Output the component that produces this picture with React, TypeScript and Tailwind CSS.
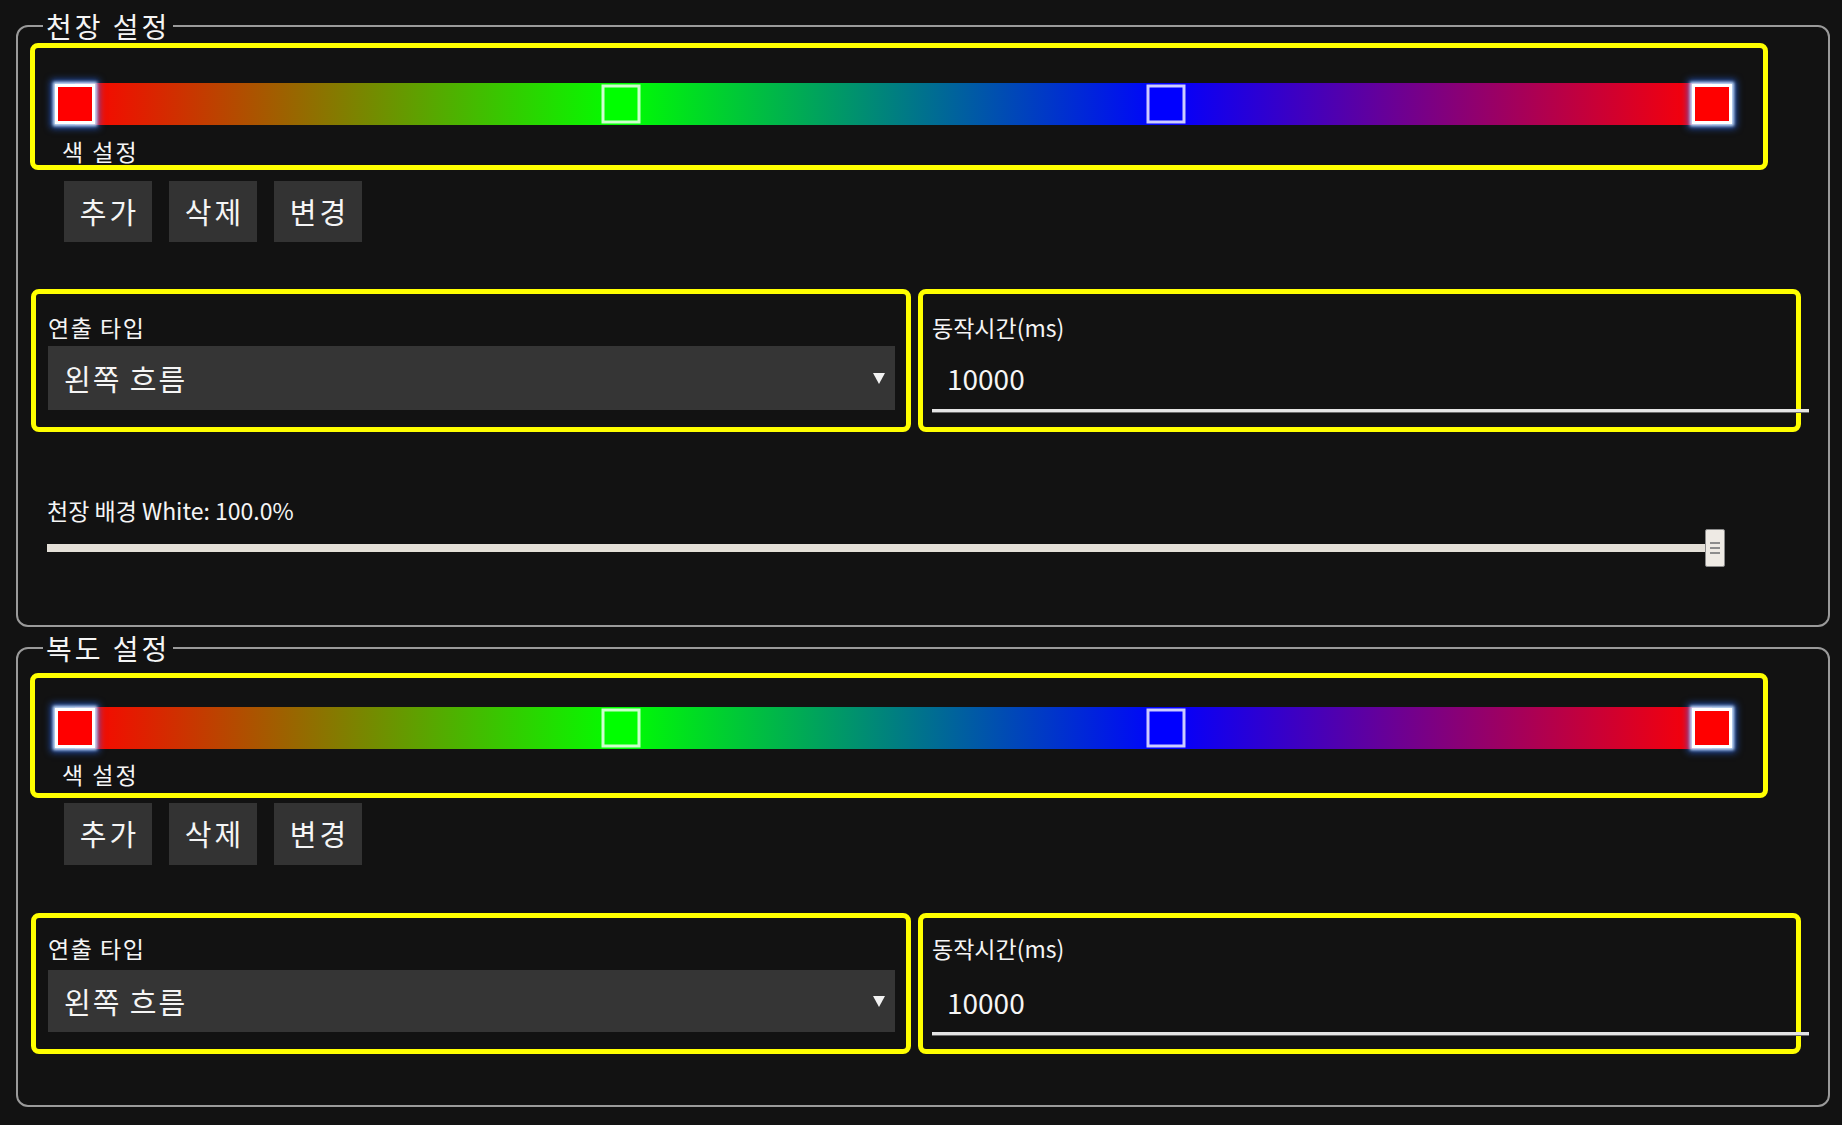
import React from "react";

type Stop = { pos: string; color: string; end: boolean };

const stops: Stop[] = [
  { pos: "left-0", color: "bg-[#ff0000]", end: true },
  { pos: "left-1/3", color: "bg-[#00ff00]", end: false },
  { pos: "left-2/3", color: "bg-[#0000ff]", end: false },
  { pos: "left-full", color: "bg-[#ff0000]", end: true },
];

type SectionProps = {
  title: string;
  className: string;
  boxMt: string;
  barPt: string;
  labelMt: string;
  boxPb: string;
  btnRow: string;
  btnH: string;
  rowMt: string;
  rowPt: string;
  selectMt: string;
  selectH: string;
  valueMt: string;
  lineMt: string;
  bottom: string;
  slider?: boolean;
};

function GradientBar(props: { barPt: string; labelMt: string; boxPb: string; boxMt: string }) {
  return (
    <div className={"mr-[48px] rounded-[8px] border-[5px] border-[#ffff00] " + props.boxMt + " " + props.barPt + " " + props.boxPb}>
      <div className="relative ml-[40px] mr-[51px] h-[42px] bg-[linear-gradient(to_right,#ff0000,#00ff00,#0000ff,#ff0000)]">
        {stops.map((s, i) => (
          <div
            key={i}
            className={
              "absolute top-1/2 -translate-x-1/2 -translate-y-1/2 " +
              s.pos +
              " " +
              s.color +
              (s.end
                ? " h-[40px] w-[40px] border-[3px] border-white shadow-[0_0_3px_2px_rgba(215,235,255,0.95),0_0_7px_4px_rgba(40,110,255,0.7)]"
                : " h-[39px] w-[39px] border-[3px] border-[rgba(255,255,255,0.8)]")
            }
          />
        ))}
      </div>
      <div className={"pl-[27px] text-[23px] leading-[26px] tracking-[2px] " + props.labelMt}>색 설정</div>
    </div>
  );
}

function Section(p: SectionProps) {
  return (
    <fieldset className={"rounded-[12px] border-2 border-[#9a9a9a] px-[12px] " + p.className + " " + p.bottom}>
      <legend className="ml-[13px] px-[3px] text-[28px] leading-[32px] tracking-[3px]">{p.title}</legend>

      <GradientBar boxMt={p.boxMt} barPt={p.barPt} labelMt={p.labelMt} boxPb={p.boxPb} />

      <div className={"ml-[34px] flex gap-[17px] " + p.btnRow}>
        {["추가", "삭제", "변경"].map((b) => (
          <button
            key={b}
            type="button"
            className={"flex w-[88px] items-center justify-center bg-[#333333] pl-[3px] text-[29px] tracking-[3px] text-[#f5f5f5] " + p.btnH}
          >
            {b}
          </button>
        ))}
      </div>

      <div className={"ml-[1px] flex gap-[7px] " + p.rowMt}>
        <div className={"w-[880px] rounded-[8px] border-[5px] border-[#ffff00] pb-[17px] pl-[12px] pr-[11px] " + p.rowPt}>
          <div className="text-[23px] leading-[26px] tracking-[1.5px]">연출 타입</div>
          <div className={"flex items-center justify-between bg-[#353535] pl-[16px] pr-[10px] " + p.selectMt + " " + p.selectH}>
            <span className="text-[29px] leading-[34px] tracking-[2px]">왼쪽 흐름</span>
            <svg width="12" height="11" viewBox="0 0 12 11">
              <polygon points="0,0 12,0 6,11" fill="#f2f2f2" />
            </svg>
          </div>
        </div>
        <div className={"w-[883px] rounded-[8px] border-[5px] border-[#ffff00] pl-[9px] " + p.rowPt}>
          <div className="text-[23px] leading-[26px]">동작시간(ms)</div>
          <div className={"pl-[15px] text-[28px] leading-[34px] " + p.valueMt}>10000</div>
          <div className={"-mr-[13px] h-[3px] bg-[#e4e4e4] shadow-[0_1px_0_#6b6b6b] " + p.lineMt} />
        </div>
      </div>

      {p.slider && (
        <div className="ml-[17px]">
          <div className="mt-[65px] text-[23px] leading-[26px]">천장 배경 White: 100.0%</div>
          <div className="mt-[6px] flex h-[38px] items-center">
            <div className="h-[8px] w-[1658px] bg-[#e4e0d8]" />
            <div className="flex h-[38px] w-[20px] flex-col items-center justify-center gap-[3px] rounded-[2px] border border-[#8a8a8a] bg-[#eeeae4]">
              <div className="h-[2px] w-[10px] bg-[#8c8c8c]" />
              <div className="h-[2px] w-[10px] bg-[#8c8c8c]" />
              <div className="h-[2px] w-[10px] bg-[#8c8c8c]" />
            </div>
          </div>
        </div>
      )}
    </fieldset>
  );
}

export default function App() {
  return (
    <div className="min-h-[1125px] bg-[#121212] pl-[16px] pr-[12px] pt-[10px] font-['Noto_Sans_CJK_KR',sans-serif] text-[#f5f5f5]">
      <Section
        title="천장 설정"
        className=""
        boxMt="mt-[1px]"
        barPt="pt-[35px]"
        labelMt="mt-[13px]"
        boxPb="pb-[1px]"
        btnRow="mt-[11px]"
        btnH="h-[61px]"
        rowMt="mt-[47px]"
        rowPt="pt-[20px]"
        selectMt="mt-[6px]"
        selectH="h-[64px]"
        valueMt="mt-[21px]"
        lineMt="mt-[14px]"
        bottom="pb-[58px]"
        slider
      />
      <Section
        title="복도 설정"
        className="mt-[5px]"
        boxMt="mt-[9px]"
        barPt="pt-[29px]"
        labelMt="mt-[12px]"
        boxPb="pb-[6px]"
        btnRow="mt-[5px]"
        btnH="h-[62px]"
        rowMt="mt-[48px]"
        rowPt="pt-[17px]"
        selectMt="mt-[9px]"
        selectH="h-[62px]"
        valueMt="mt-[24px]"
        lineMt="mt-[13px]"
        bottom="pb-[51px]"
      />
    </div>
  );
}
